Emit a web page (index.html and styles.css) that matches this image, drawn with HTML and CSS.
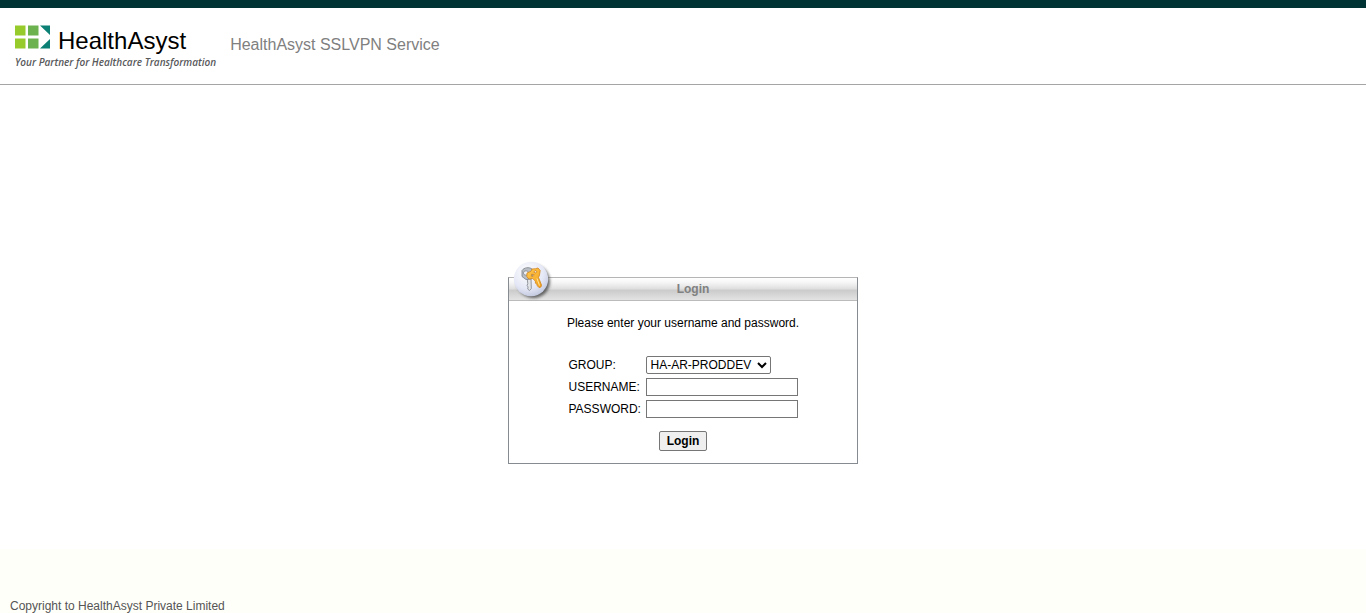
FILE: index.html
```html
<!DOCTYPE html>
<html lang="en">
<head>
<meta charset="utf-8">
<title>HealthAsyst SSLVPN Service</title>
<link rel="stylesheet" href="styles.css">
</head>
<body>
<header class="masthead">
  <div class="brand">
    <div class="brand-row">
      <svg class="brand-mark" viewBox="0 0 36 24" width="36" height="24" aria-hidden="true">
        <path fill="#97cb2b" d="M0 .5h10.500v10H0zM0 13.500h10.500v10H0z"/>
        <path fill="#6cb34f" d="M13 .5h10.500v10H13zM13 13.500h10.500v10H13z"/>
        <path fill="#0c8074" d="M25 .5h10V10zM35 14v9.500H25z"/>
      </svg>
      <span class="brand-name">HealthAsyst</span>
    </div>
    <div class="tagline">Your Partner for Healthcare Transformation</div>
  </div>
  <h1 class="service">HealthAsyst SSLVPN Service</h1>
</header>
<main class="content">
  <form class="panel">
    <div class="panel-head">
      <svg class="keys" viewBox="0 0 44 44" width="44" height="44" aria-hidden="true">
        <defs>
          <radialGradient id="disc" cx=".4" cy=".3" r=".8">
            <stop offset="0" stop-color="#fff"/>
            <stop offset=".6" stop-color="#e4e7f5"/>
            <stop offset="1" stop-color="#b8bfd8"/>
          </radialGradient>
          <linearGradient id="gold" x2="1" y2="1">
            <stop offset="0" stop-color="#ffc84e"/>
            <stop offset="1" stop-color="#f5a21c"/>
          </linearGradient>
          <filter id="shade" x="-20%" y="-20%" width="150%" height="150%">
            <feGaussianBlur stdDeviation="1.6"/>
          </filter>
        </defs>
        <circle cx="23.500" cy="23.500" r="16.500" fill="#444" opacity=".8" filter="url(#shade)"/>
        <circle cx="21" cy="21" r="17.200" fill="url(#disc)"/>
        <path d="M17 19l4 1 .3 10.500-1.800 2-1.800-1.500.4-2-1-1.500.7-2z" fill="#e2e4e7" stroke="#888d95" stroke-width=".9"/>
        <path d="M12 12.500c2-3 7-3.800 10-1.500l1 5-2 5-5 .5-4-3z" fill="#b9bec5" stroke="#777c84" stroke-width=".8"/>
        <ellipse cx="16" cy="15" rx="2.600" ry="2.200" fill="#eef0f6" stroke="#777c84" stroke-width=".7"/>
        <path fill-rule="evenodd" d="M17 15l4-1.800 1-2.200 3.500-.3 2.500-.7 2.200 2.500-.7 4.500-1 2.500 3 7.500-.5 2-2 .6-1.700-1.800-.6-2-1.200-.5-.2-2-1-1.200-1.500-1.500-4 .4-2-2.500zm4.500 1.200l-.2 2 1.900.2 1-1.900zM25 12.500l-1.200 1.700 2 .9 1-1.700z" fill="url(#gold)" stroke="#cf8521" stroke-width=".8"/>
        <path d="M27 20.500l2.500 7" stroke="#ffe49a" stroke-width="1"/>
      </svg>
      <h2 class="panel-title">Login</h2>
    </div>
    <div class="panel-body">
      <p class="message">Please enter your username and password.</p>
      <div class="fields">
        <label for="group">GROUP:</label>
        <select id="group" class="group"><option>HA-AR-PRODDEV</option></select>
        <label for="username">USERNAME:</label>
        <input id="username" class="entry" type="text">
        <label for="password">PASSWORD:</label>
        <input id="password" class="entry" type="password">
      </div>
      <button class="submit" type="button">Login</button>
    </div>
  </form>
</main>
<footer class="footer">Copyright to HealthAsyst Private Limited</footer>
</body>
</html>
```
FILE: styles.css
```css
* {
  box-sizing: border-box;
}

body {
  margin: 0;
  min-height: 100vh;
  display: flex;
  flex-direction: column;
  background: #fff;
  color: #000;
  font: 12px/14px "Liberation Sans", Arial, sans-serif;
}

.masthead {
  display: flex;
  gap: 14px;
  padding: 17px 15px 14px;
  border-top: 8px solid #003333;
  border-bottom: 1px solid #a5a5a5;
}

.brand-row {
  display: flex;
  gap: 7px;
  height: 29px;
}

.brand-name {
  font-size: 24px;
  line-height: 32px;
}

.tagline {
  color: #58595b;
  font: italic 600 10px/16px "Open Sans", sans-serif;
  white-space: nowrap;
}

.service {
  margin: 11px 0 0;
  color: #808080;
  font-size: 16px;
  line-height: 18px;
  font-weight: 400;
}

.content {
  flex: 1;
  display: flex;
  align-items: center;
  justify-content: center;
  padding-top: 107px;
}

.panel {
  width: 350px;
  border: 1px solid #858b91;
  border-top-color: #b5b5b5;
}

.panel-head {
  position: relative;
  height: 23px;
  padding-left: 20px;
  border-bottom: 1px solid #bbb;
  background: linear-gradient(#fff 0%, #f6f6f6 20%, #dedede 50%, #cbcbcb 55%, #e3e3e3 100%);
}

.keys {
  position: absolute;
  left: 1px;
  top: -20px;
}

.panel-title {
  margin: 0;
  color: #808080;
  font-size: 12px;
  line-height: 22px;
  text-align: center;
}

.panel-body {
  display: flex;
  flex-direction: column;
  align-items: center;
  padding: 15px 12px 12px;
}

.message {
  margin: 0 0 26px;
}

.fields {
  display: grid;
  grid-template-columns: 73px 152px;
  column-gap: 4px;
  row-gap: 4px;
  align-items: center;
  margin-bottom: 13px;
}

.group,
.entry {
  height: 18px;
  margin: 0;
  border: 1px solid #767676;
  background: #fff;
  color: #000;
  font: 12px/14px "Liberation Sans", Arial, sans-serif;
}

.group {
  width: 125px;
  padding: 0;
  border-radius: 2px;
}

.entry {
  width: 100%;
  padding: 1px 2px;
}

.submit {
  height: 20px;
  padding: 1px 7px;
  border: 1px solid #767676;
  border-radius: 2px;
  background: #efefef;
  color: #000;
  font: bold 12px/14px "Liberation Sans", Arial, sans-serif;
}

.footer {
  padding: 50px 10px 0;
  background: #fffffa;
  color: #555;
}
```
